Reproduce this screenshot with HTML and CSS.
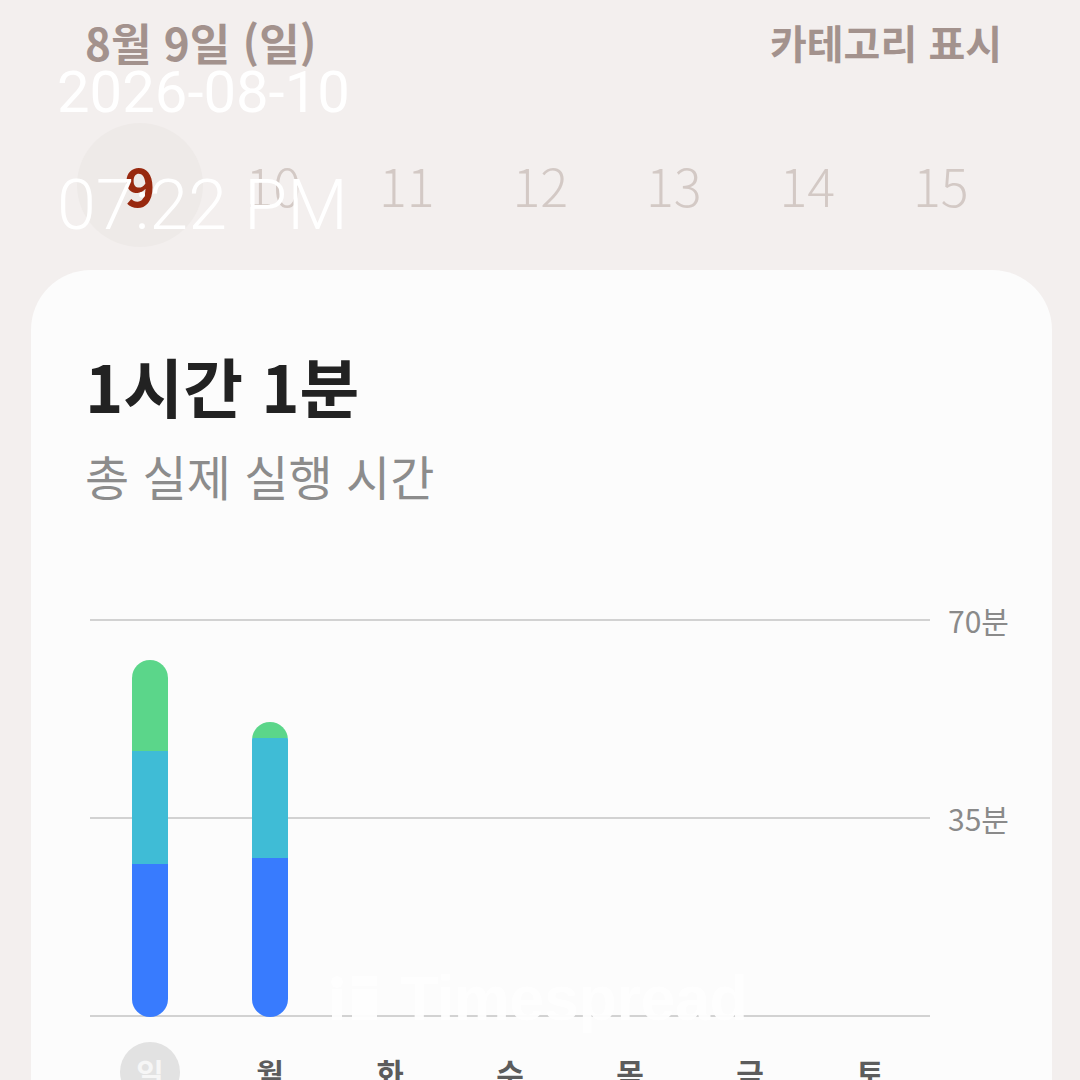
FILE: index.html
```html
<!DOCTYPE html>
<html lang="ko">
<head>
<meta charset="utf-8">
<title>Timespread</title>
<link rel="stylesheet" href="styles.css">
</head>
<body>
  <header class="header">
    <div class="day-title">8월 9일 (일)</div>
    <div class="toggle">카테고리 표시</div>
  </header>

  <div class="dates">
    <div class="date selected"><span>9</span></div>
    <div class="date"><span>10</span></div>
    <div class="date"><span>11</span></div>
    <div class="date"><span>12</span></div>
    <div class="date"><span>13</span></div>
    <div class="date"><span>14</span></div>
    <div class="date"><span>15</span></div>
  </div>

  <section class="card">
    <h1 class="total">1시간 1분</h1>
    <p class="total-label">총 실제 실행 시간</p>

    <div class="chart">
      <div class="layer grid-layer">
        <div class="row"><div class="line"></div><div class="lab">70분</div></div>
        <div class="row"><div class="line"></div><div class="lab">35분</div></div>
        <div class="row last"><div class="line"></div></div>
      </div>
      <div class="layer bars">
        <div class="col">
          <div class="bar" style="height:357px">
            <div class="seg green" style="height:91px"></div>
            <div class="seg cyan" style="height:113px"></div>
            <div class="seg blue" style="flex:1"></div>
          </div>
        </div>
        <div class="col">
          <div class="bar" style="height:295px">
            <div class="seg green" style="height:16px"></div>
            <div class="seg cyan" style="height:120px"></div>
            <div class="seg blue" style="flex:1"></div>
          </div>
        </div>
        <div class="col"></div>
        <div class="col"></div>
        <div class="col"></div>
        <div class="col"></div>
        <div class="col"></div>
      </div>
    </div>

    <div class="days">
      <div class="day today"><span>일</span></div>
      <div class="day"><span>월</span></div>
      <div class="day"><span>화</span></div>
      <div class="day"><span>수</span></div>
      <div class="day"><span>목</span></div>
      <div class="day"><span>금</span></div>
      <div class="day"><span>토</span></div>
    </div>
  </section>

  <div class="stamp">
    <div class="stamp-date">2026-08-10</div>
    <div class="stamp-time">07:22 PM</div>
  </div>

  <div class="watermark">
    <svg class="wm-logo" width="48" height="48" viewBox="0 0 48 48">
      <circle cx="7" cy="8" r="6" fill="#ffffff"/>
      <rect x="2" y="15" width="10" height="31" fill="#ffffff"/>
      <rect x="22" y="2" width="25" height="10" fill="#ffffff"/>
      <rect x="22" y="15" width="25" height="31" fill="#ffffff"/>
    </svg>
    <span class="wm-text">Timespread</span>
  </div>
</body>
</html>
```

FILE: styles.css
```css
* { box-sizing: border-box; }

html, body {
  margin: 0;
  padding: 0;
}

body {
  width: 1080px;
  height: 1080px;
  overflow: hidden;
  position: relative;
  background: #f3efee;
  font-family: "Noto Sans CJK KR", "Noto Sans", sans-serif;
}

.header {
  display: flex;
  justify-content: space-between;
  align-items: center;
  height: 84px;
  padding: 0 78px 0 85px;
  color: #a3928d;
  font-weight: 700;
  line-height: 1;
}

.day-title { font-size: 44px; }
.toggle { font-size: 40px; }

.dates {
  display: grid;
  grid-template-columns: repeat(7, 133.5px);
  margin: 39px 0 0 73px;
}

.date {
  height: 124px;
  display: flex;
  align-items: center;
  justify-content: center;
  font-family: "Noto Sans CJK KR", "Noto Sans", sans-serif;
  font-weight: 300;
  font-size: 52px;
  line-height: 1;
  color: #d3c9c5;
}

.date.selected span {
  display: flex;
  align-items: center;
  justify-content: center;
  width: 126px;
  height: 124px;
  border-radius: 50%;
  background: #eeeae8;
  color: #98290f;
  font-weight: 700;
}

.card {
  margin: 23px 28px 0 31px;
  height: 900px;
  background: #fcfcfc;
  border-radius: 60px;
  padding: 78px 0 0 54px;
}

.total {
  margin: 0;
  font-size: 65px;
  line-height: 74px;
  font-weight: 700;
  color: #222222;
}

.total-label {
  margin: 25px 0 0;
  font-size: 48px;
  line-height: 56px;
  font-weight: 400;
  color: #8c8c8c;
}

.chart {
  display: grid;
  margin: 116px 0 0 5px;
}

.layer { grid-area: 1 / 1; }

.grid-layer {
  display: flex;
  flex-direction: column;
}

.row {
  display: flex;
  align-items: flex-start;
  height: 198px;
}

.row.last { height: 2px; }

.line {
  width: 840px;
  height: 2px;
  background: #d2d2d2;
}

.lab {
  margin: -19px 0 0 18px;
  font-size: 30px;
  line-height: 40px;
  color: #8a8a8a;
}

.bars {
  display: grid;
  grid-template-columns: repeat(7, 120px);
  align-items: end;
  height: 397px;
  margin-top: 1px;
  align-self: start;
}

.col {
  display: flex;
  justify-content: center;
  align-items: flex-end;
  height: 100%;
}

.bar {
  width: 36px;
  border-radius: 18px;
  overflow: hidden;
  display: flex;
  flex-direction: column;
}

.seg.green { background: #5bd68a; }
.seg.cyan { background: #3fbcd6; }
.seg.blue { background: #387bfe; }

.days {
  display: grid;
  grid-template-columns: repeat(7, 120px);
  margin: 25px 0 0 5px;
}

.day {
  display: flex;
  justify-content: center;
}

.day span {
  display: flex;
  align-items: center;
  justify-content: center;
  width: 60px;
  height: 60px;
  font-size: 30px;
  font-weight: 700;
  color: #5c5c5c;
  line-height: 1;
}

.day.today span {
  border-radius: 50%;
  background: #e2e2e2;
  color: #f6f6f6;
}

.stamp {
  position: absolute;
  left: 57px;
  top: 0;
  color: #ffffff;
  font-family: Roboto, "Noto Sans", sans-serif;
  line-height: 1;
}

.stamp-date {
  position: absolute;
  top: 63px;
  left: 0;
  font-size: 58px;
  font-weight: 400;
  white-space: nowrap;
}

.stamp-time {
  position: absolute;
  top: 170px;
  left: 0;
  font-size: 70px;
  font-weight: 300;
  white-space: nowrap;
}

.watermark {
  position: absolute;
  left: 330px;
  top: 974px;
  display: flex;
  align-items: flex-end;
  gap: 22px;
  opacity: 0.95;
}

.wm-logo { display: block; }

.wm-text {
  font-family: "Liberation Sans", Arial, sans-serif;
  font-weight: 700;
  font-size: 63px;
  line-height: 48px;
  color: #ffffff;
  letter-spacing: -0.5px;
}
```
